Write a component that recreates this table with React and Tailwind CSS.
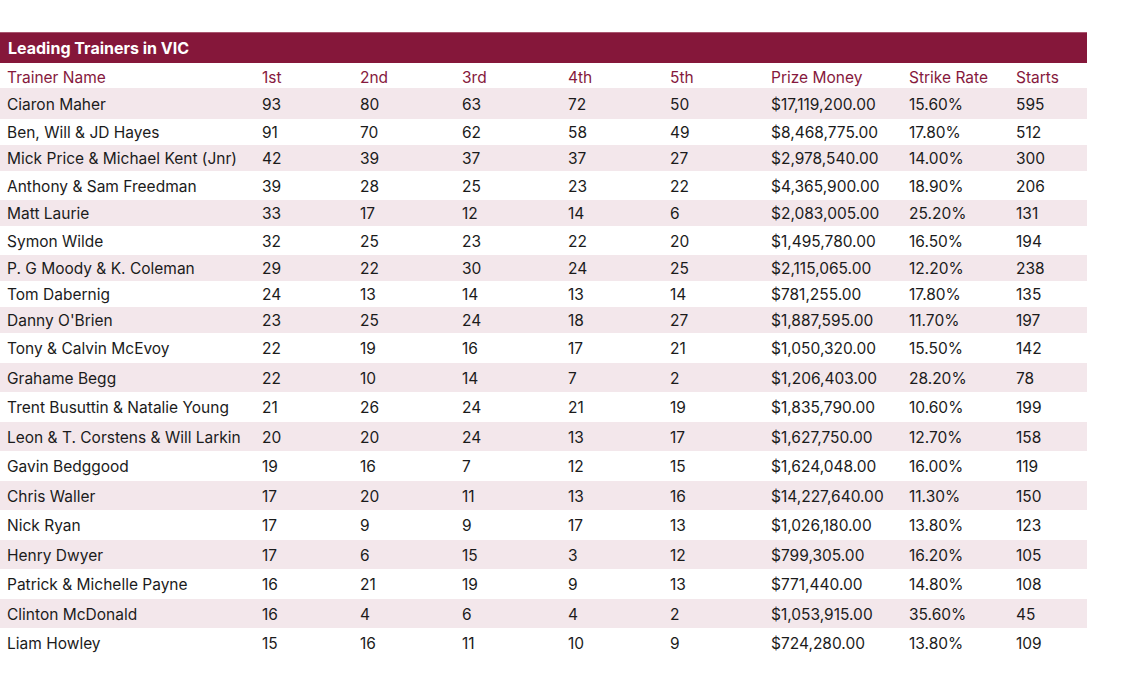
import React from "react";

const rows = [
  ["Ciaron Maher", 93, 80, 63, 72, 50, "$17,119,200.00", "15.60%", 595, 31],
  ["Ben, Will & JD Hayes", 91, 70, 62, 58, 49, "$8,468,775.00", "17.80%", 512, 26],
  ["Mick Price & Michael Kent (Jnr)", 42, 39, 37, 37, 27, "$2,978,540.00", "14.00%", 300, 26],
  ["Anthony & Sam Freedman", 39, 28, 25, 23, 22, "$4,365,900.00", "18.90%", 206, 29],
  ["Matt Laurie", 33, 17, 12, 14, 6, "$2,083,005.00", "25.20%", 131, 26],
  ["Symon Wilde", 32, 25, 23, 22, 20, "$1,495,780.00", "16.50%", 194, 29],
  ["P. G Moody & K. Coleman", 29, 22, 30, 24, 25, "$2,115,065.00", "12.20%", 238, 26],
  ["Tom Dabernig", 24, 13, 14, 13, 14, "$781,255.00", "17.80%", 135, 26],
  ["Danny O'Brien", 23, 25, 24, 18, 27, "$1,887,595.00", "11.70%", 197, 26],
  ["Tony & Calvin McEvoy", 22, 19, 16, 17, 21, "$1,050,320.00", "15.50%", 142, 30],
  ["Grahame Begg", 22, 10, 14, 7, 2, "$1,206,403.00", "28.20%", 78, 29],
  ["Trent Busuttin & Natalie Young", 21, 26, 24, 21, 19, "$1,835,790.00", "10.60%", 199, 30],
  ["Leon & T. Corstens & Will Larkin", 20, 20, 24, 13, 17, "$1,627,750.00", "12.70%", 158, 29],
  ["Gavin Bedggood", 19, 16, 7, 12, 15, "$1,624,048.00", "16.00%", 119, 30],
  ["Chris Waller", 17, 20, 11, 13, 16, "$14,227,640.00", "11.30%", 150, 29],
  ["Nick Ryan", 17, 9, 9, 17, 13, "$1,026,180.00", "13.80%", 123, 30],
  ["Henry Dwyer", 17, 6, 15, 3, 12, "$799,305.00", "16.20%", 105, 29],
  ["Patrick & Michelle Payne", 16, 21, 19, 9, 13, "$771,440.00", "14.80%", 108, 30],
  ["Clinton McDonald", 16, 4, 6, 4, 2, "$1,053,915.00", "35.60%", 45, 29],
  ["Liam Howley", 15, 16, 11, 10, 9, "$724,280.00", "13.80%", 109, 29],
];

const heads = ["Trainer Name", "1st", "2nd", "3rd", "4th", "5th", "Prize Money", "Strike Rate", "Starts"];

const cols = "grid grid-cols-[255px_98px_102px_106px_102px_101px_138px_107px_78px]";

export default function App() {
  return (
    <div className="w-[1131px] h-[697px] bg-white pt-[32px] font-['Inter',sans-serif] text-[#1b1b1b]">
      <div className="w-[1087px]">
        <div className="h-[31px] bg-[#85173a] border-t border-[#a9566f] flex items-center pl-[8px] text-white font-bold text-[16px]">
          Leading Trainers in VIC
        </div>
        <div className={`${cols} h-[25px] items-center pt-[3px] text-[#86193d] text-[15.5px]`}>
          {heads.map(h => (
            <div key={h} className="pl-[7px] whitespace-nowrap">{h}</div>
          ))}
        </div>
        {rows.map((r, i) => (
          <div
            key={r[0]}
            className={`${cols} items-center pt-[2px] text-[15.5px] ${i % 2 === 0 ? "bg-[#f3e7eb]" : "bg-white"}`}
            style={{ height: r[9] }}
          >
            {r.slice(0, 9).map((c, j) => (
              <div key={j} className="pl-[7px] whitespace-nowrap">{c}</div>
            ))}
          </div>
        ))}
      </div>
    </div>
  );
}
